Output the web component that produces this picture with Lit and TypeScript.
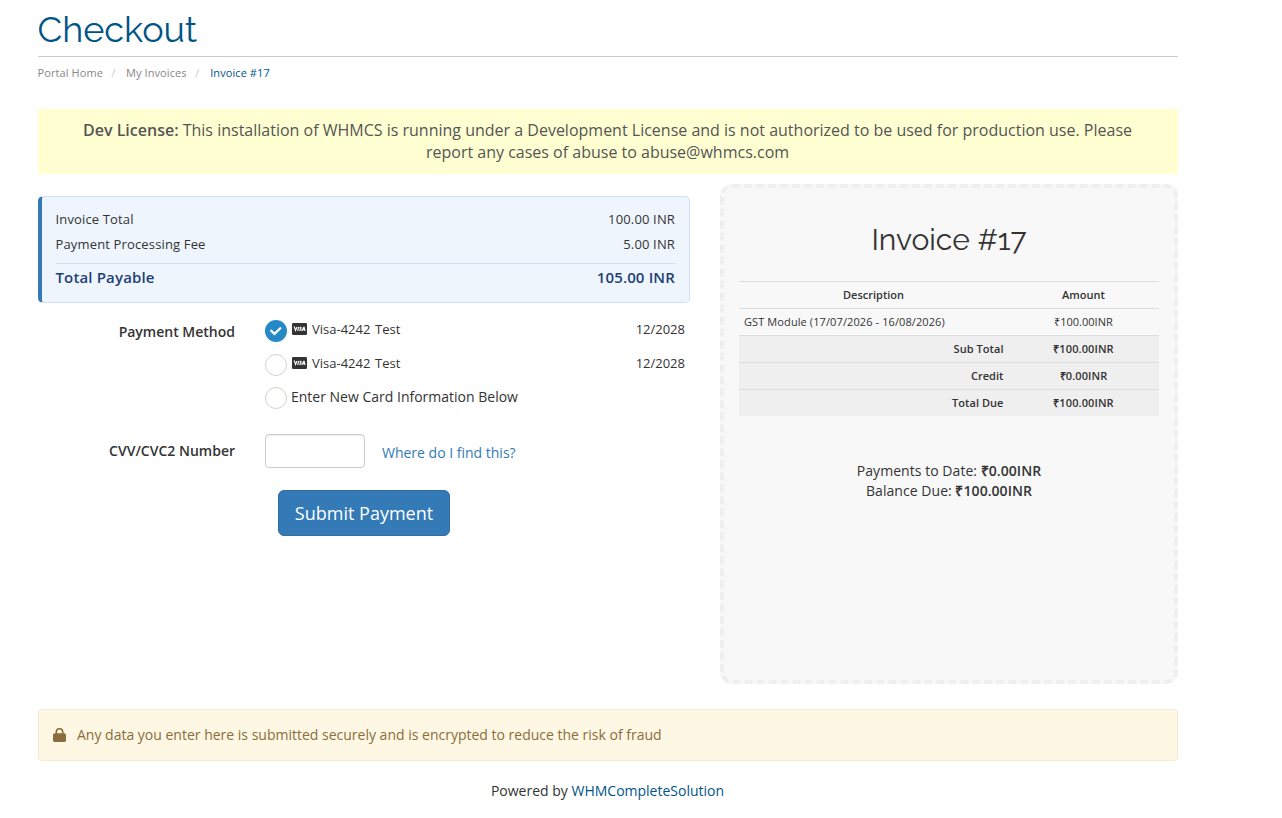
import { LitElement, html, css, svg } from "lit";
import { customElement } from "lit/decorators.js";

const check = svg`<path d="M6.300 10.800 9.500 13.900 15.300 8.200" fill="none" stroke="#fff" stroke-width="2.300" stroke-linecap="round"/>`;

@customElement("visa-icon")
class VisaIcon extends LitElement {
  static styles = css`
    :host { display: block; width: 15px; height: 12px; }
    svg { display: block; }
  `;
  render() {
    return html`<svg width="15" height="12" viewBox="0 0 15 12">
      <rect x="0" y="0" width="15" height="12" rx="1.3" fill="#333"/>
      <g fill="none" stroke="#fff" stroke-width="1.1">
        <path d="M1.700 4h.8l1 3.400L5 4"/>
        <path d="M6.500 3.800 5.800 8"/>
        <path d="M9.600 4.400C8.500 4 7.900 4.300 8 4.900c.1.600 1.200.7 1.100 1.500-.1.900-1.200 1-2.200.6"/>
        <path d="M9.900 8 11.700 4.300h.5l.8 3.700M10.800 6.800h1.900"/>
      </g>
    </svg>`;
  }
}

@customElement("radio-mark")
class RadioMark extends LitElement {
  static properties = { checked: { type: Boolean } };
  declare checked: boolean;
  static styles = css`
    :host { display: block; width: 22px; height: 22px; }
    svg { display: block; }
  `;
  render() {
    return html`<svg width="22" height="22" viewBox="0 0 22 22">
      ${this.checked
        ? svg`<circle cx="11" cy="11" r="11" fill="#2489c5"/>${check}`
        : svg`<circle cx="11" cy="11" r="10.5" fill="#fff" stroke="#d3d2cc"/>`}
    </svg>`;
  }
}

@customElement("app-root")
class AppRoot extends LitElement {
  static styles = css`
    :host {
      display: block;
      box-sizing: border-box;
      height: 818px;
      overflow: hidden;
      padding: 0 104px 0 38px;
      background: #fff;
      color: #333;
      font: 14px/20px "Open Sans", sans-serif;
    }
    * { box-sizing: border-box; }
    b { font-weight: 600; }
    a { text-decoration: none; white-space: nowrap; }
    h1, h2 { margin: 0; font-family: Raleway, Lato, sans-serif; font-weight: 400; white-space: nowrap; }
    h1 { height: 57px; border-bottom: 1px solid #ccc; color: #058; font-size: 36px; line-height: 58px; }
    .title { margin-left: -0.5px; }
    .crumbs { display: flex; height: 52px; margin-left: -0.5px; font-size: 11px; line-height: 32px; letter-spacing: 0.09px; color: #888; white-space: nowrap; }
    .sep { width: 23px; padding-left: 8.5px; color: #ccc; }
    .current { padding-left: 0.5px; color: #058; }
    .license { height: 65px; padding: 10px 11px 10px 10px; background: #ffffd2; color: #555; font-size: 16px; line-height: 22px; text-align: center; white-space: nowrap; }
    .main { display: grid; grid-template-columns: 652px 458px; column-gap: 30px; height: 500px; margin-top: 10px; }
    .left { padding-top: 12px; }
    .totals { height: 107px; padding: 10px 14px 0 13.5px; border: 1px solid #cfe0f1; border-left: 4px solid #337ab7; border-radius: 5px; background: #eef5fd; font-size: 13px; letter-spacing: 0.15px; }
    .line { display: flex; justify-content: space-between; height: 25px; line-height: 25px; white-space: nowrap; }
    .sum { height: 30px; margin-top: 6px; border-top: 1px solid #cfe0f1; color: #1f3f77; font-size: 15px; font-weight: 600; line-height: 27px; }
    .field { display: grid; grid-template-columns: 197px 420px; column-gap: 30px; }
    .label { text-align: right; font-weight: 600; white-space: nowrap; }
    .methods { padding-top: 16px; }
    .methods .label { padding-top: 3px; }
    .option { display: flex; height: 34px; font-size: 13px; white-space: nowrap; }
    .option radio-mark { margin-top: 1px; }
    .option:last-child radio-mark { margin-top: 0; }
    .option visa-icon { margin: 4px 5px 0 5px; }
    .card { width: 59px; }
    .kind { padding-left: 4px; }
    .option .expiry { margin-left: auto; }
    .option .new { margin-left: 4px; font-size: 14px; }
    .cvv { padding-top: 13px; }
    .cvv .label { padding-top: 7px; }
    .cvv-row { display: flex; gap: 17px; }
    .input { width: 100px; height: 34px; border: 1px solid #ccc; border-radius: 4px; box-shadow: inset 0 1px 1px rgba(0,0,0,.075); }
    .find { padding-top: 9px; color: #337ab7; }
    .submit { display: block; width: 172px; height: 46px; margin: 22px 0 0 240px; padding: 0; border: 1px solid #2e6da4; border-radius: 6px; background: #337ab7; color: #fff; font: 18px/44px "Open Sans", sans-serif; white-space: nowrap; }
    .invoice { padding: 35px 15px 0; border: 4px dashed #efefef; border-radius: 12px; background: #f8f8f8; text-align: center; }
    h2 { height: 58px; font-size: 30px; line-height: 33px; }
    .table { display: grid; grid-template-columns: 269px 151px; font-size: 11px; line-height: 26px; white-space: nowrap; }
    .cell { height: 27px; border-top: 1px solid #ddd; padding: 0 5px; }
    .head { font-weight: 600; }
    .desc { text-align: left; letter-spacing: 0.1px; }
    .foot { background: #efefef; font-weight: 600; letter-spacing: 0.1px; }
    .name { padding-right: 4.5px; text-align: right; letter-spacing: 0.05px; }
    .balance { padding-top: 45px; letter-spacing: 0.05px; white-space: nowrap; }
    .secure { display: flex; align-items: center; height: 52px; margin-top: 25px; padding: 0 14px; border: 1px solid #f7ebcb; border-radius: 4px; background: #fdf7e3; color: #8a6d3b; white-space: nowrap; }
    .secure svg { display: block; flex: none; margin-right: 11px; }
    .powered { padding: 20px 1px 0 0; text-align: center; white-space: nowrap; }
    .powered a { color: #058; }
  `;

  option(checked: boolean) {
    return html`<div class="option">
      <radio-mark ?checked=${checked}></radio-mark><visa-icon></visa-icon>
      <span class="card">Visa-4242</span><span class="kind">Test</span><span class="expiry">12/2028</span>
    </div>`;
  }

  footRow(name: string, amount: string) {
    return html`<div class="cell foot name">${name}</div><div class="cell foot">${amount}</div>`;
  }

  render() {
    return html`
      <h1><span class="title">Checkout</span></h1>
      <nav class="crumbs">
        <span>Portal Home</span><span class="sep">/</span><span>My Invoices</span><span class="sep">/</span><span class="current">Invoice #17</span>
      </nav>
      <div class="license"><b>Dev License:</b> This installation of WHMCS is running under a Development License and is not authorized to be used for production use. Please<br>report any cases of abuse to abuse@whmcs.com</div>
      <div class="main">
        <div class="left">
          <div class="totals">
            <div class="line"><span>Invoice Total</span><span>100.00 INR</span></div>
            <div class="line"><span>Payment Processing Fee</span><span>5.00 INR</span></div>
            <div class="line sum"><span>Total Payable</span><span>105.00 INR</span></div>
          </div>
          <div class="field methods">
            <div class="label">Payment Method</div>
            <div>
              ${this.option(true)}${this.option(false)}
              <div class="option"><radio-mark></radio-mark><span class="new">Enter New Card Information Below</span></div>
            </div>
          </div>
          <div class="field cvv">
            <div class="label">CVV/CVC2 Number</div>
            <div class="cvv-row"><div class="input"></div><a class="find">Where do I find this?</a></div>
          </div>
          <button class="submit">Submit Payment</button>
        </div>
        <div class="invoice">
          <h2>Invoice #17</h2>
          <div class="table">
            <div class="cell head">Description</div><div class="cell head">Amount</div>
            <div class="cell desc">GST Module (17/07/2026 - 16/08/2026)</div><div class="cell">₹100.00INR</div>
            ${this.footRow("Sub Total", "₹100.00INR")}
            ${this.footRow("Credit", "₹0.00INR")}
            ${this.footRow("Total Due", "₹100.00INR")}
          </div>
          <div class="balance">Payments to Date: <b>₹0.00INR</b><br>Balance Due: <b>₹100.00INR</b></div>
        </div>
      </div>
      <div class="secure">
        <svg width="13" height="14" viewBox="0 0 13 14">
          <rect x="0" y="5.300" width="13" height="8.700" rx="1.700" fill="#8a6d3b"/>
          <path d="M3.300 6.500V4a3.200 3.200 0 0 1 6.400 0v2.500" fill="none" stroke="#8a6d3b" stroke-width="1.600"/>
        </svg>
        <span>Any data you enter here is submitted securely and is encrypted to reduce the risk of fraud</span>
      </div>
      <div class="powered">Powered by <a>WHMCompleteSolution</a></div>
    `;
  }
}
